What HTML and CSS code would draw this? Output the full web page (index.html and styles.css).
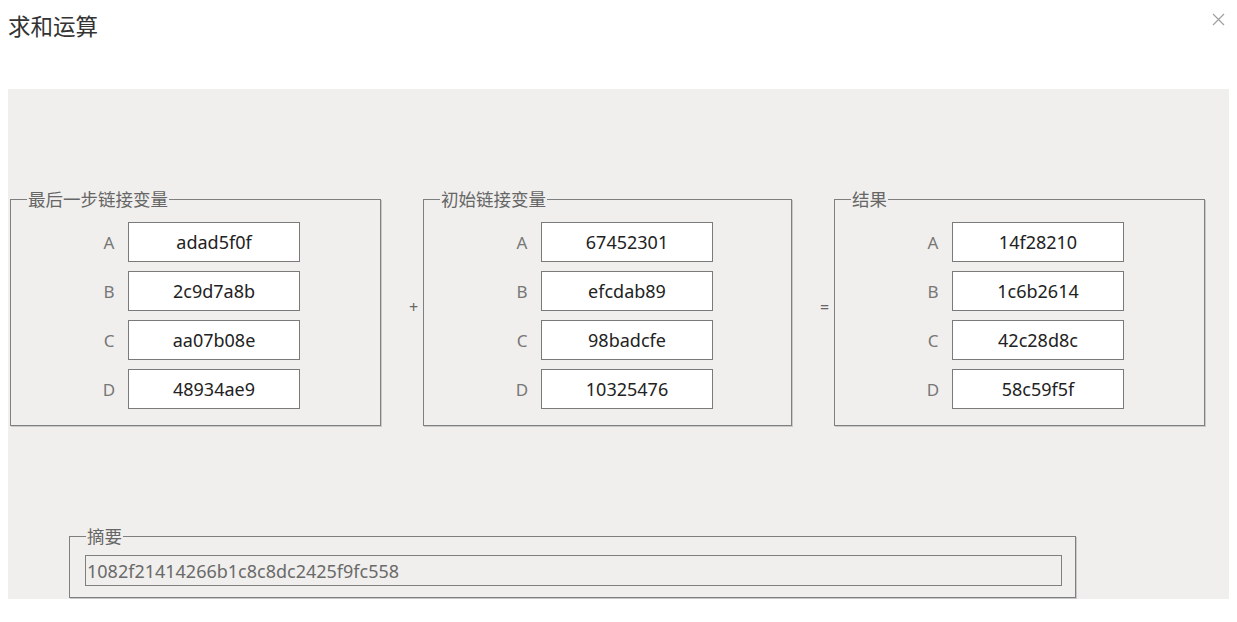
FILE: index.html
```html
<!DOCTYPE html>
<html lang="zh-CN">
<head>
    <meta charset="UTF-8">
    <meta name="viewport" content="width=device-width, initial-scale=1.0">
    <title>求和运算</title>
    <link rel="stylesheet" href="styles.css">
</head>
<body>
    <!-- Header -->
    <header class="dialog-header">
        <h1>求和运算</h1>
        <span class="close-btn">
            <svg width="13" height="13" viewBox="0 0 13 13">
                <path d="M1 1 L12 12 M12 1 L1 12" stroke="#a0a0a0" stroke-width="1.2" fill="none"/>
            </svg>
        </span>
    </header>

    <!-- Body -->
    <section class="panel">
        <div class="sum-row">
            <fieldset class="group">
                <legend>最后一步链接变量</legend>
                <div class="fields">
                    <div class="field"><label>A</label><input type="text" value="adad5f0f" readonly></div>
                    <div class="field"><label>B</label><input type="text" value="2c9d7a8b" readonly></div>
                    <div class="field"><label>C</label><input type="text" value="aa07b08e" readonly></div>
                    <div class="field"><label>D</label><input type="text" value="48934ae9" readonly></div>
                </div>
            </fieldset>

            <span class="op">+</span>

            <fieldset class="group">
                <legend>初始链接变量</legend>
                <div class="fields">
                    <div class="field"><label>A</label><input type="text" value="67452301" readonly></div>
                    <div class="field"><label>B</label><input type="text" value="efcdab89" readonly></div>
                    <div class="field"><label>C</label><input type="text" value="98badcfe" readonly></div>
                    <div class="field"><label>D</label><input type="text" value="10325476" readonly></div>
                </div>
            </fieldset>

            <span class="op">=</span>

            <fieldset class="group">
                <legend>结果</legend>
                <div class="fields">
                    <div class="field"><label>A</label><input type="text" value="14f28210" readonly></div>
                    <div class="field"><label>B</label><input type="text" value="1c6b2614" readonly></div>
                    <div class="field"><label>C</label><input type="text" value="42c28d8c" readonly></div>
                    <div class="field"><label>D</label><input type="text" value="58c59f5f" readonly></div>
                </div>
            </fieldset>
        </div>

        <fieldset class="digest">
            <legend>摘要</legend>
            <input type="text" value="1082f21414266b1c8c8dc2425f9fc558" readonly>
        </fieldset>
    </section>
</body>
</html>
```

FILE: styles.css
```css
* {
    box-sizing: border-box;
}

body {
    margin: 8px;
    background-color: #fff;
    color: #333;
    font-family: "Noto Sans", "Noto Sans CJK SC", sans-serif;
}

.dialog-header {
    display: flex;
    justify-content: space-between;
    align-items: flex-start;
    height: 81px;
}

.dialog-header h1 {
    margin: 0;
    font-size: 22.5px;
    font-weight: normal;
    line-height: 34px;
    color: #333;
    font-family: "Noto Sans CJK SC", sans-serif;
}

.close-btn {
    margin-top: 5px;
    margin-right: 4px;
    line-height: 0;
}

.panel {
    background-color: #f0efed;
    padding: 100px 0 1px 2px;
}

.sum-row {
    display: flex;
    align-items: flex-start;
}

fieldset {
    margin: 0;
    padding: 0;
    border: 1px solid #7f7f7f;
    box-shadow: 1px 1px 0 #c9c9c9;
}

legend {
    padding: 0 1px;
    margin-left: 16px;
    font-family: "Noto Sans CJK SC", sans-serif;
    font-size: 17.5px;
    line-height: 20px;
    color: #666;
}

.group {
    width: 371px;
    padding: 13px 0 16px 0;
}

.fields {
    display: flex;
    flex-direction: column;
    gap: 9px;
    padding-left: 88px;
}

.field {
    display: flex;
    align-items: center;
}

.field label {
    width: 20px;
    margin-right: 9px;
    text-align: center;
    font-size: 17px;
    color: #777;
}

.field input {
    width: 172px;
    height: 40px;
    border: 1px solid #7a7a7a;
    background: #fff;
    text-align: center;
    font-family: "Noto Sans", sans-serif;
    font-size: 18px;
    color: #222;
    outline: none;
}

.op {
    width: 42px;
    padding-left: 28px;
    margin-top: 107px;
    font-size: 16px;
    color: #666;
}

.sum-row .group:nth-child(3) {
    width: 369px;
}

.digest {
    width: 1007px;
    margin: 100px 0 0 59px;
    padding: 9px 0 11px 0;
}

.digest input {
    display: block;
    width: 977px;
    height: 31px;
    margin-left: 15px;
    padding: 0 1px;
    border: 1px solid #7f7f7f;
    background: #f0efed;
    font-family: "Noto Sans", sans-serif;
    font-size: 18px;
    color: #6a6a6a;
    outline: none;
}
```
